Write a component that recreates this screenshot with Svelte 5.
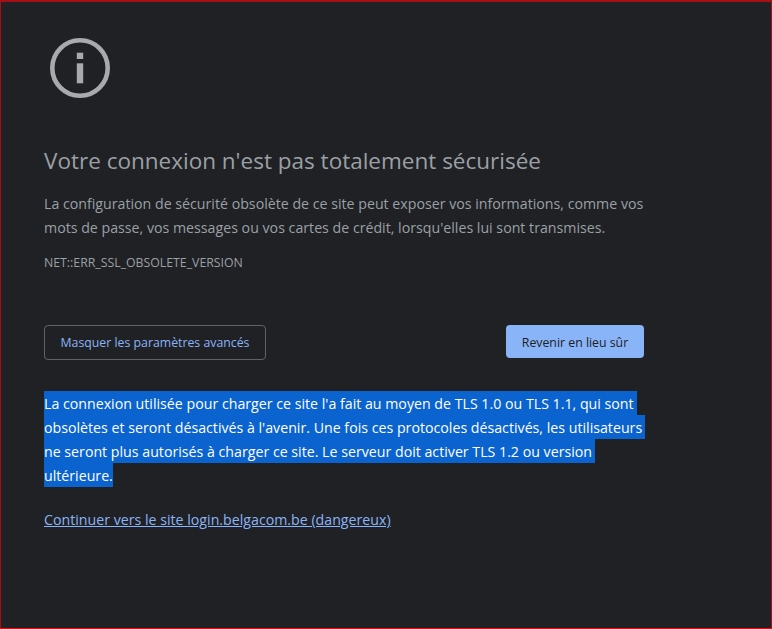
<script>
	const details = [
		"La connexion utilisée pour charger ce site l'a fait au moyen de TLS 1.0 ou TLS 1.1, qui sont",
		"obsolètes et seront désactivés à l'avenir. Une fois ces protocoles désactivés, les utilisateurs",
		"ne seront plus autorisés à charger ce site. Le serveur doit activer TLS 1.2 ou version",
		"ultérieure."
	];
</script>

<div class="frame">
	<main class="interstitial">
		<svg class="icon" viewBox="0 0 72 72" aria-hidden="true">
			<circle cx="36" cy="36" r="27.7" fill="none" stroke="#a8aaad" stroke-width="4.6" />
			<rect x="32.8" y="20.7" width="6.4" height="6.3" fill="#a8aaad" />
			<rect x="32.8" y="31.3" width="6.4" height="20" fill="#a8aaad" />
		</svg>

		<h1>Votre connexion n'est pas totalement sécurisée</h1>
		<p class="summary">
			La configuration de sécurité obsolète de ce site peut exposer vos informations, comme vos
			mots de passe, vos messages ou vos cartes de crédit, lorsqu'elles lui sont transmises.
		</p>
		<p class="code">NET::ERR_SSL_OBSOLETE_VERSION</p>

		<div class="actions">
			<button class="secondary">Masquer les paramètres avancés</button>
			<button class="primary">Revenir en lieu sûr</button>
		</div>

		<div class="details">
			{#each details as line}
				<span class="selected">{line}</span>
			{/each}
		</div>

		<a class="proceed" href="#proceed">Continuer vers le site login.belgacom.be (dangereux)</a>
	</main>
</div>

<style>
	:global(body) {
		margin: 0;
		background: #202124;
	}

	.frame {
		box-sizing: border-box;
		width: 772px;
		height: 629px;
		overflow: hidden;
		background: #202124;
		border: 1px solid #a80f14;
		border-top-width: 2px;
		border-bottom-color: #e80f14;
		font-family: "Open Sans", "Noto Sans", sans-serif;
	}

	.interstitial {
		width: 600px;
		padding: 30px 0 0 43px;
	}

	.icon {
		display: block;
		width: 72px;
		height: 72px;
	}

	h1 {
		margin: 43px 0 0;
		font-size: 22.5px;
		line-height: 28px;
		font-weight: 400;
		white-space: nowrap;
		color: #9aa0a6;
	}

	.summary {
		margin: 17px 0 0;
		width: 610px;
		font-size: 14.2px;
		line-height: 24px;
		color: #9aa0a6;
	}

	.code {
		margin: 15px 0 0;
		font-size: 12.3px;
		line-height: 16px;
		color: #9aa0a6;
	}

	.actions {
		display: flex;
		justify-content: space-between;
		align-items: flex-start;
		margin-top: 54px;
	}

	button {
		box-sizing: border-box;
		border-radius: 4px;
		font-family: inherit;
		font-size: 12.3px;
		cursor: pointer;
	}

	.secondary {
		width: 222px;
		height: 35px;
		background: transparent;
		border: 1px solid #5f6368;
		color: #8ab4f8;
	}

	.primary {
		width: 138px;
		height: 33px;
		padding-top: 2px;
		background: #8ab4f8;
		border: none;
		color: #202124;
	}

	.details {
		margin-top: 31px;
		font-size: 14.2px;
		line-height: 23px;
		color: #fff;
	}

	.selected {
		display: block;
		width: fit-content;
		padding: 1px 3px 0 0;
		background: #0a63ce;
		white-space: nowrap;
	}

	.selected:last-child {
		padding-right: 0;
	}

	.proceed {
		display: block;
		width: fit-content;
		margin-top: 21px;
		font-size: 14.2px;
		line-height: 24px;
		color: #8ab4f8;
	}
</style>
